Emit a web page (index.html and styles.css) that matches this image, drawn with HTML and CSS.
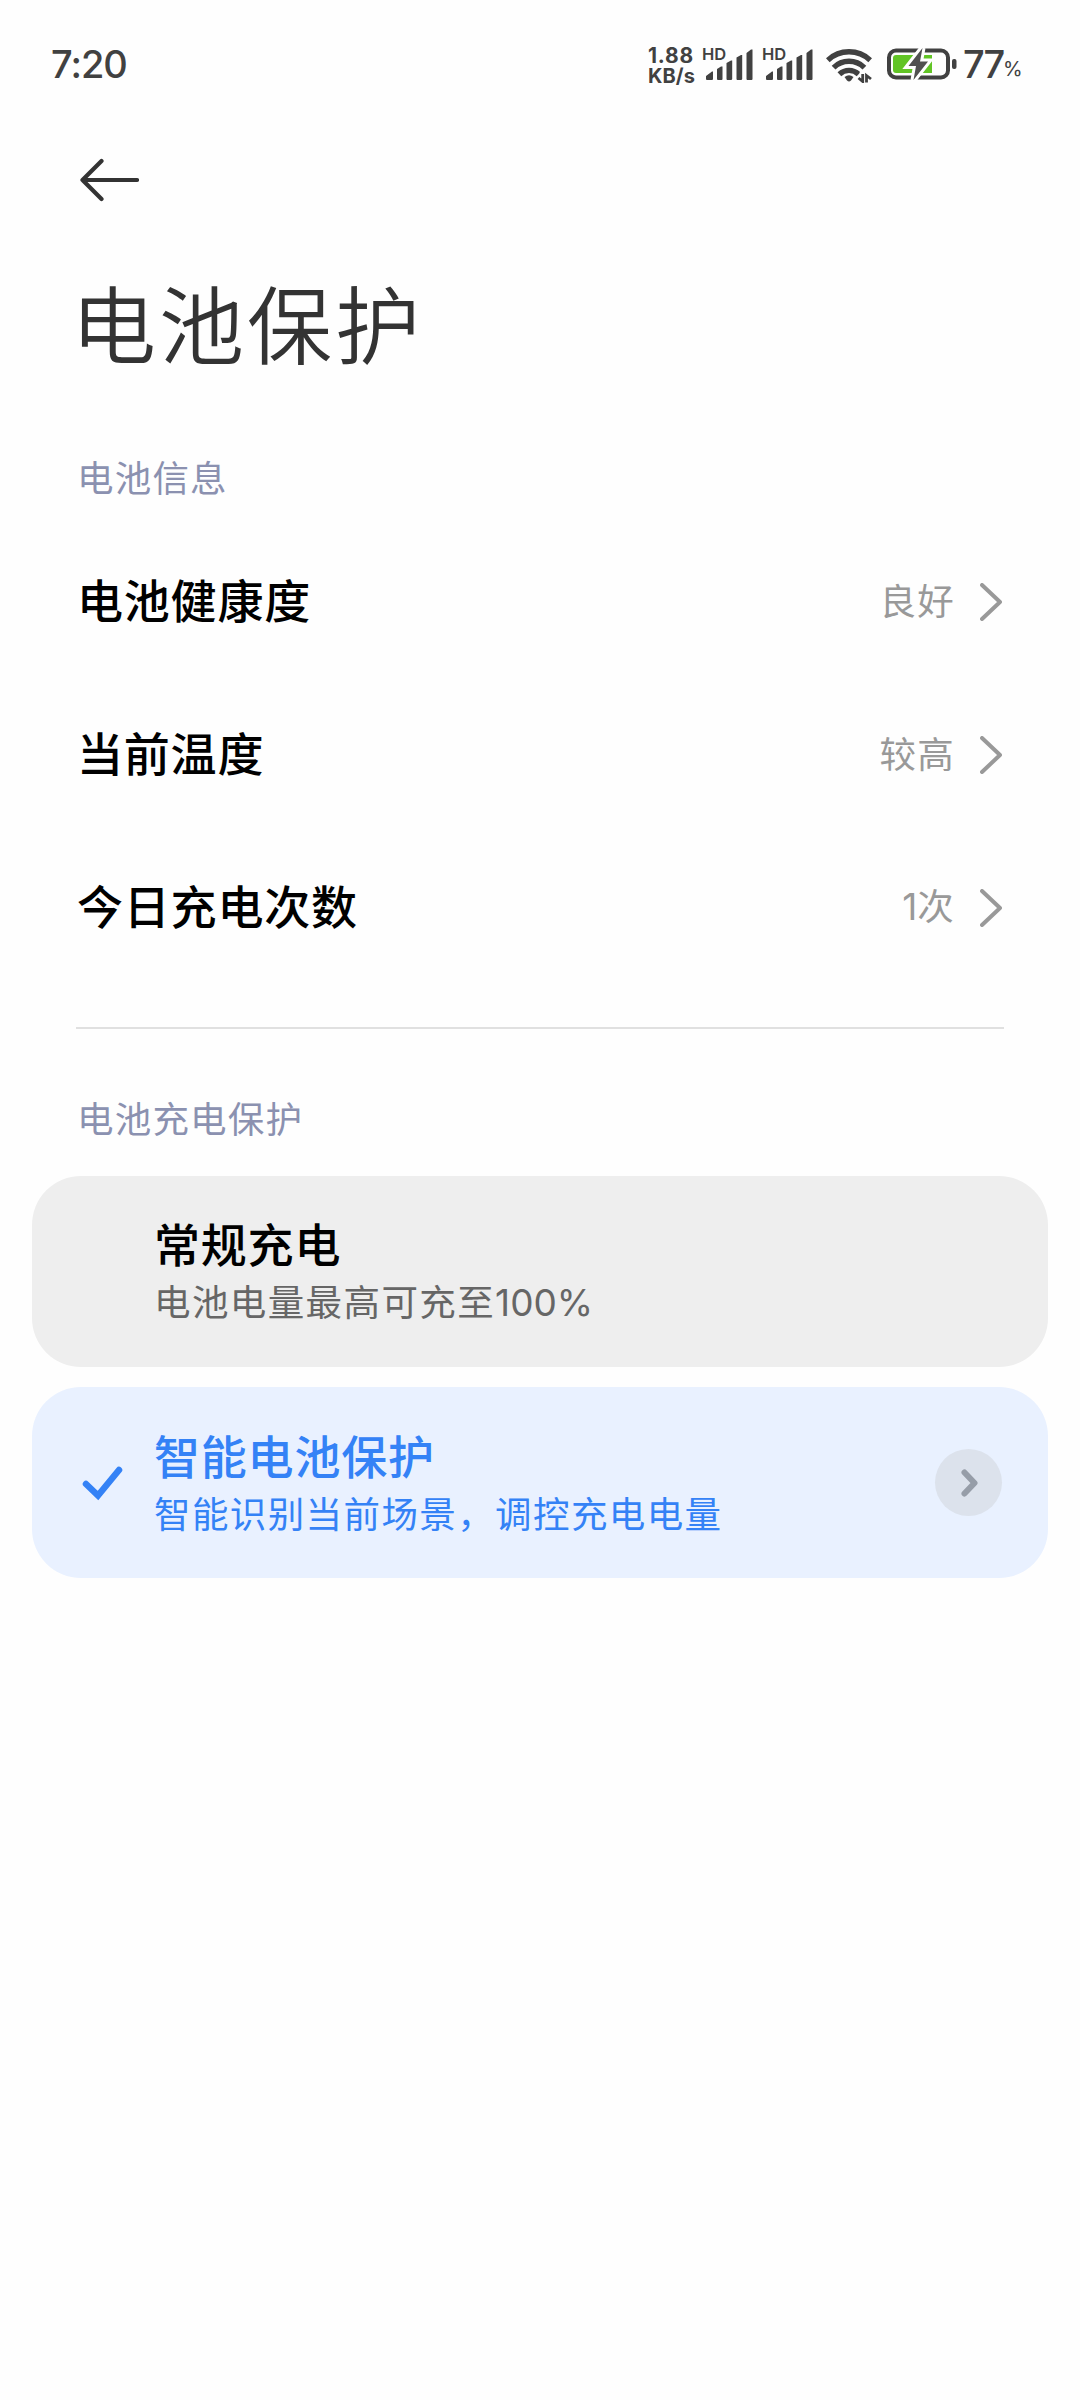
FILE: index.html
```html
<!DOCTYPE html>
<html lang="zh-CN">
<head>
<meta charset="utf-8">
<title>电池保护</title>
<link rel="stylesheet" href="styles.css">
</head>
<body>
<header class="status">
  <span class="clock">7:20</span>
  <div class="indicators">
    <div class="speed"><span class="speed-value">1.88</span><span class="speed-unit">KB/s</span></div>
    <div class="signal">
      <span class="hd">HD</span>
      <svg class="bars" width="47" height="31" viewBox="0 0 47 31"><path d="M0 30V27L6 22.5H7V30Q7 31 6 31H1Q0 31 0 30ZM11 20L15 17.5H16.5V30Q16.500 31 15.500 31H12Q11 31 11 30ZM20.500 14L25 11.500H26.200V30Q26 31 25 31H21.500Q20.500 31 20.500 30ZM30.500 8.500L35 6H36.200V30Q36 31 35 31H31.500Q30.500 31 30.500 30ZM40.500 4L45 .5H46.500V30Q46.500 31 45.500 31H41.500Q40.500 31 40.500 30Z"/></svg>
    </div>
    <div class="signal">
      <span class="hd">HD</span>
      <svg class="bars" width="47" height="31" viewBox="0 0 47 31"><path d="M0 30V27L6 22.5H7V30Q7 31 6 31H1Q0 31 0 30ZM11 20L15 17.5H16.5V30Q16.500 31 15.500 31H12Q11 31 11 30ZM20.500 14L25 11.500H26.200V30Q26 31 25 31H21.500Q20.500 31 20.500 30ZM30.500 8.500L35 6H36.200V30Q36 31 35 31H31.500Q30.500 31 30.500 30ZM40.500 4L45 .5H46.500V30Q46.500 31 45.500 31H41.500Q40.500 31 40.500 30Z"/></svg>
    </div>
    <svg class="wifi" width="46" height="36" viewBox="0 0 46 36">
      <g fill="none" stroke="#414141" stroke-width="5.400">
        <path d="M1.800 13.200A31 31 0 0 1 44.200 13.200"/>
        <path d="M7.600 20.600A22 22 0 0 1 38.400 20.600"/>
        <path d="M13.400 27.200A14 14 0 0 1 32.600 27.200"/>
      </g>
      <path fill="#414141" d="M18.500 30Q23 26.500 27.500 30L25 33.500Q23 35.500 21 33.500Z"/>
      <path fill="none" stroke="#fefefe" stroke-width="6" d="M36.700 25V36M40.500 36V27"/>
      <path fill="none" stroke="#414141" stroke-width="2.800" d="M36.700 27V34.500L32.500 31M40.500 35.500V28.500L45 32"/>
    </svg>
    <svg class="battery" width="70" height="32" viewBox="0 0 70 32">
      <rect x="2" y="2.500" width="59" height="27" rx="7" fill="none" stroke="#414141" stroke-width="4"/>
      <path fill="#61c425" d="M9 7H45V25H9Q6 25 6 22V10Q6 7 9 7Z"/>
      <path fill="#505050" stroke="#fefefe" stroke-width="6" paint-order="stroke" d="M35.500 0L21.500 18H29L26.500 32L41 13.500H33Z"/>
      <rect x="65" y="11" width="4.500" height="10" rx="2" fill="#414141"/>
    </svg>
    <span class="level">77</span><span class="percent">%</span>
  </div>
</header>
<nav class="nav">
  <svg width="60" height="44" viewBox="0 0 60 44"><path d="M58 22H3.500M22.500 3L3.500 22L22.500 41" fill="none" stroke="#333" stroke-width="4.200" stroke-linecap="round" stroke-linejoin="round"/></svg>
</nav>
<main>
  <h1 class="title">电池保护</h1>
  <section class="info">
    <h2 class="label">电池信息</h2>
    <div class="row"><span class="name">电池健康度</span><span class="value">良好</span><svg class="chevron" width="22" height="38" viewBox="0 0 22 38"><path d="M2 2L20 19L2 36"/></svg></div>
    <div class="row"><span class="name">当前温度</span><span class="value">较高</span><svg class="chevron" width="22" height="38" viewBox="0 0 22 38"><path d="M2 2L20 19L2 36"/></svg></div>
    <div class="row"><span class="name">今日充电次数</span><span class="value"><span class="num">1</span>次</span><svg class="chevron" width="22" height="38" viewBox="0 0 22 38"><path d="M2 2L20 19L2 36"/></svg></div>
  </section>
  <section class="modes">
    <h2 class="label">电池充电保护</h2>
    <div class="card">
      <div class="card-text"><span class="name">常规充电</span><span class="desc">电池电量最高可充至<span class="num">100%</span></span></div>
    </div>
    <div class="card selected">
      <svg class="check" width="42" height="36" viewBox="0 0 42 36"><path d="M5 19L17 30.500L38 5" fill="none" stroke="#3482f6" stroke-width="6.500" stroke-linecap="round" stroke-linejoin="miter"/></svg>
      <div class="card-text"><span class="name">智能电池保护</span><span class="desc">智能识别当前场景，调控充电电量</span></div>
      <span class="more"><svg width="20" height="30" viewBox="0 0 20 30"><path d="M5.500 4.500L15.500 15L5.500 25.500" fill="none" stroke="#969da8" stroke-width="6" stroke-linecap="round" stroke-linejoin="round"/></svg></span>
    </div>
  </section>
</main>
</body>
</html>
```
FILE: styles.css
```css
* { box-sizing: border-box; }
body {
  margin: 0;
  min-height: 2400px;
  background: #fefefe;
  color: #000;
  font-family: "Noto Sans CJK SC", sans-serif;
}
svg { display: block; flex: none; }
h1, h2 { margin: 0; }

.status {
  display: flex;
  justify-content: space-between;
  height: 130px;
  padding: 45px 56px 0 51px;
  color: #414141;
  font-family: Inter, sans-serif;
  line-height: 39px;
}
.clock { font-size: 38px; font-weight: 500; letter-spacing: -1px; }
.indicators { display: flex; align-items: flex-start; height: 38px; }
.speed {
  display: flex;
  flex-direction: column;
  width: 55px;
  padding-top: 1px;
  font-size: 20px;
  font-weight: 700;
  line-height: 20px;
}
.speed-value { font-size: 21px; letter-spacing: .8px; }
.speed-unit { letter-spacing: .1px; }
.signal { position: relative; width: 60px; padding: 4px 0 0 3px; }
.hd {
  position: absolute;
  left: -1px;
  top: 0;
  font-size: 16.500px;
  font-weight: 600;
  line-height: 19px;
}
.bars { fill: #414141; }
.wifi { margin: 2px 15px 0 3px; }
.battery { margin: 3px 7px 0 0; }
.level { font-size: 38px; font-weight: 500; letter-spacing: -2px; width: 40px; margin-left: -1px; }
.percent { font-size: 20px; width: 21px; padding-top: 5px; }

.nav { height: 120px; padding: 28px 0 0 79px; }

.title {
  height: 180px;
  padding-left: 71px;
  color: #333;
  font-size: 85px;
  font-weight: 350;
  letter-spacing: 3px;
  line-height: 142px;
}
.label {
  height: 95px;
  padding-left: 77px;
  color: #8b91b0;
  font-size: 36.500px;
  font-weight: 400;
  letter-spacing: 1.200px;
  line-height: 94px;
}
.info {
  height: 599px;
}
.info::after {
  content: "";
  display: block;
  height: 2px;
  margin: 43px 76px 0 76px;
  background: #e0e0e0;
}
.row {
  display: flex;
  align-items: center;
  height: 153px;
  padding: 0 78px 0 77px;
}
.row .name { flex: 1; padding-bottom: 7px; }
.name { font-size: 46px; font-weight: 500; letter-spacing: .8px; line-height: 60px; }
.value { padding-bottom: 3px; color: #999; font-size: 36.500px; letter-spacing: 1.200px; line-height: 50px; }
.num { font-family: Inter, sans-serif; font-size: 37px; letter-spacing: 0; }
.chevron { margin-left: 25px; fill: none; stroke: #999; stroke-width: 4; stroke-linecap: round; stroke-linejoin: round; }

.modes { display: flex; flex-direction: column; padding: 42px 32px 0; }
.modes .label { padding-left: 45px; height: 105px; }
.card {
  display: flex;
  align-items: center;
  height: 191px;
  margin-bottom: 20px;
  padding: 0 46px 0 122px;
  border-radius: 49px;
  background: #eee;
}
.card-text { display: flex; flex: 1; flex-direction: column; padding-top: 1px; }
.desc { color: #666; font-size: 36.500px; letter-spacing: 1.400px; line-height: 58px; }
.selected { padding-left: 49px; background: #e9f1ff; color: #3482f6; }
.selected .desc { color: #3482f6; }
.check { margin-right: 31px; }
.more {
  display: flex;
  align-items: center;
  justify-content: center;
  width: 67px;
  height: 67px;
  border-radius: 50%;
  background: #dce2ec;
}
```
